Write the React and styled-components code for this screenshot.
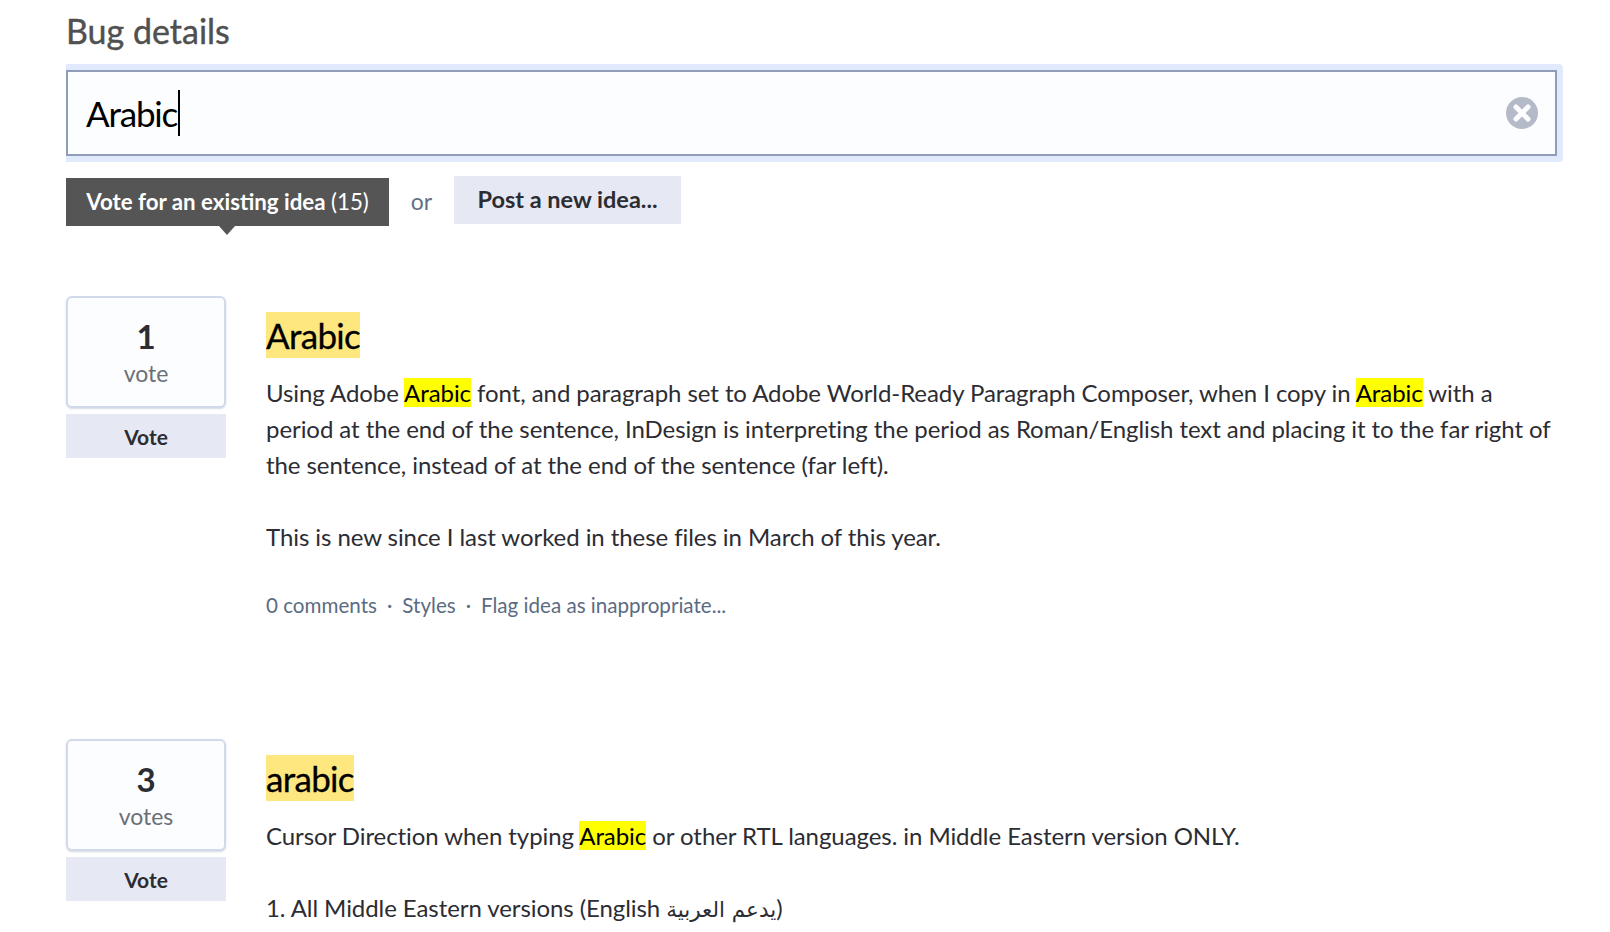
import React from "react";
import styled, { createGlobalStyle } from "styled-components";

const Global = createGlobalStyle`
    html, body {
        margin: 0;
        padding: 0;
        height: 932px;
        overflow: hidden;
        background: #fff;
    }
    body {
        font-family: Lato, "DejaVu Sans", sans-serif;
        color: #2c2c33;
    }
`;

const Page = styled.div`
    padding: 10px 47px 0 66px;
    width: 1497px;
`;
const Heading = styled.h2`
    margin: 0 0 12px;
    font-size: 34px;
    line-height: 42px;
    font-weight: 400;
    color: #505050;
    -webkit-text-stroke: 0.4px #505050;
`;
const SearchHalo = styled.div`
    padding: 6px 6px 6px 0;
    background: #e1eafc;
    border-radius: 0 4px 4px 0;
`;
const SearchBox = styled.div`
    display: flex;
    align-items: center;
    justify-content: space-between;
    box-sizing: border-box;
    height: 86px;
    padding: 0 17px 0 18px;
    border: 2px solid #8f9db8;
    background: #fcfdff;
`;
const SearchText = styled.div`
    display: flex;
    align-items: center;
    font-size: 35px;
    letter-spacing: -1.2px;
    color: #000;
`;
const Caret = styled.span`
    display: inline-block;
    width: 2px;
    height: 46px;
    margin-left: 1px;
    background: #000;
`;
const Tabs = styled.div`
    display: flex;
    align-items: flex-start;
    margin-top: 14px;
`;
const ActiveTab = styled.div`
    position: relative;
    box-sizing: border-box;
    width: 323px;
    height: 48px;
    margin-top: 2px;
    background: #555;
    color: #fff;
    font-size: 22.3px;
    font-weight: 700;
    line-height: 48px;
    text-align: center;

    &::after {
        content: "";
        position: absolute;
        left: 153px;
        top: 100%;
        border-left: 8px solid transparent;
        border-right: 8px solid transparent;
        border-top: 9px solid #555;
    }
`;
const TabCount = styled.span`
    font-weight: 400;
`;
const Or = styled.span`
    width: 65px;
    text-align: center;
    font-size: 23px;
    line-height: 50px;
    color: #667085;
`;
const PostButton = styled.div`
    width: 227px;
    height: 48px;
    background: #e6e9f3;
    font-size: 23.5px;
    font-weight: 700;
    line-height: 47px;
    text-align: center;
    color: #2c2c33;
`;
const Idea = styled.section`
    display: flex;
    gap: 40px;
    margin-top: ${(p) => p.$top}px;
`;
const VoteColumn = styled.div`
    flex: 0 0 160px;
`;
const VoteBox = styled.div`
    box-sizing: border-box;
    height: 112px;
    padding-top: 17px;
    border: 2px solid #d2d9ea;
    border-radius: 6px;
    background: #fcfdff;
    box-shadow: 0 1px 2px rgba(120, 130, 160, 0.3);
    text-align: center;
`;
const VoteCount = styled.div`
    font-size: 33px;
    line-height: 42px;
    font-weight: 700;
`;
const VoteLabel = styled.div`
    margin-top: 1px;
    font-size: 23px;
    line-height: 30px;
    color: #6b6f76;
`;
const VoteButton = styled.div`
    height: 44px;
    margin-top: 6px;
    background: #e6e9f3;
    font-size: 21px;
    font-weight: 700;
    line-height: 45px;
    text-align: center;
`;
const Content = styled.div`
    flex: 1;
    padding-top: 16px;
`;
const Title = styled.h3`
    margin: 0 0 17px;
    font-size: 35px;
    line-height: 46px;
    font-weight: 400;
    letter-spacing: -0.7px;
    color: #000;
    -webkit-text-stroke: 0.3px #000;
`;
const TitleMark = styled.mark`
    background: #fee77f;
    color: #000;
    display: inline-block;
`;
const Body = styled.p`
    margin: 0;
    font-size: 24px;
    line-height: 36px;
    letter-spacing: -0.07px;
`;
const Mark = styled.mark`
    background: #ffff00;
    color: #000;
`;
const ArabicRun = styled.span`
    font-family: "DejaVu Sans", sans-serif;
    font-size: 21.5px;
`;
const Meta = styled.div`
    margin-top: 36px;
    font-size: 20.6px;
    line-height: 28px;
    color: #5b6b82;
`;
const Dot = styled.span`
    margin: 0 10px;
`;
const ClearIcon = () => (
    <svg width="32" height="32" viewBox="0 0 32 32">
        <circle cx="16" cy="16" r="16" fill="#b4bac8" />
        <path d="M10 10L22 22M22 10L10 22" stroke="#fcfdff" strokeWidth="5" strokeLinecap="round" />
    </svg>
);

export default function App() {
    return (
        <Page>
            <Global />
            <Heading>Bug details</Heading>
            <SearchHalo>
                <SearchBox>
                    <SearchText>Arabic<Caret /></SearchText>
                    <ClearIcon />
                </SearchBox>
            </SearchHalo>
            <Tabs>
                <ActiveTab>Vote for an existing idea <TabCount>(15)</TabCount></ActiveTab>
                <Or>or</Or>
                <PostButton>Post a new idea...</PostButton>
            </Tabs>
            <Idea $top={70}>
                <VoteColumn>
                    <VoteBox>
                        <VoteCount>1</VoteCount>
                        <VoteLabel>vote</VoteLabel>
                    </VoteBox>
                    <VoteButton>Vote</VoteButton>
                </VoteColumn>
                <Content>
                    <Title><TitleMark>Arabic</TitleMark></Title>
                    <Body>
                        Using Adobe <Mark>Arabic</Mark> font, and paragraph set to Adobe World-Ready Paragraph Composer, when I copy in <Mark>Arabic</Mark> with a period at the end of the sentence, InDesign is interpreting the period as Roman/English text and placing it to the far right of the sentence, instead of at the end of the sentence (far left).
                        <br /><br />
                        This is new since I last worked in these files in March of this year.
                    </Body>
                    <Meta>0 comments<Dot>·</Dot>Styles<Dot>·</Dot>Flag idea as inappropriate...</Meta>
                </Content>
            </Idea>
            <Idea $top={120}>
                <VoteColumn>
                    <VoteBox>
                        <VoteCount>3</VoteCount>
                        <VoteLabel>votes</VoteLabel>
                    </VoteBox>
                    <VoteButton>Vote</VoteButton>
                </VoteColumn>
                <Content>
                    <Title><TitleMark>arabic</TitleMark></Title>
                    <Body>
                        Cursor Direction when typing <Mark>Arabic</Mark> or other RTL languages. in Middle Eastern version ONLY.
                        <br /><br />
                        1. All Middle Eastern versions (English <ArabicRun>يدعم العربية</ArabicRun>)
                    </Body>
                </Content>
            </Idea>
        </Page>
    );
}
